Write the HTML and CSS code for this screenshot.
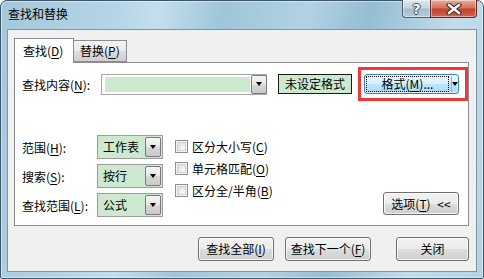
FILE: index.html
```html
<!DOCTYPE html>
<html lang="zh-CN">
<head>
    <meta charset="UTF-8">
    <title>查找和替换</title>
    <link rel="stylesheet" href="styles.css">
</head>
<body>
<div class="window">
    <div class="titlebar">
        <span class="title">查找和替换</span>
        <div class="caption-btns">
            <div class="cap help">?</div>
            <div class="cap close">
                <svg width="16" height="12" viewBox="0 0 16 12">
                    <path d="M3 2 L13 10 M13 2 L3 10" stroke="#3a2622" stroke-width="4.4" stroke-linecap="square"/>
                    <path d="M3 2 L13 10 M13 2 L3 10" stroke="#fff" stroke-width="2.4" stroke-linecap="square"/>
                </svg>
            </div>
        </div>
    </div>
    <div class="client">
        <div class="tabs">
            <div class="tab active">查找(<u>D</u>)</div>
            <div class="tab">替换(<u>P</u>)</div>
        </div>
        <div class="panel">
            <div class="find-row">
                <span class="find-label">查找内容(<u>N</u>):</span>
                <div class="combo find-combo">
                    <span class="field"></span>
                    <span class="drop"><i class="arrow"></i></span>
                </div>
                <div class="format-state">未设定格式</div>
                <div class="highlight">
                    <div class="btn format-btn">
                        <span class="focus-text">格式(<u>M</u>)...</span>
                        <span class="split"><i class="arrow"></i></span>
                    </div>
                </div>
            </div>
            <div class="options">
                <div class="opt-grid">
                    <span class="opt-label">范围(<u>H</u>):</span>
                    <div class="combo small"><span class="field">工作表</span><span class="drop"><i class="arrow"></i></span></div>
                    <span class="opt-label">搜索(<u>S</u>):</span>
                    <div class="combo small"><span class="field">按行</span><span class="drop"><i class="arrow"></i></span></div>
                    <span class="opt-label">查找范围(<u>L</u>):</span>
                    <div class="combo small"><span class="field">公式</span><span class="drop"><i class="arrow"></i></span></div>
                </div>
                <div class="checks">
                    <div class="check"><span class="box"></span><span>区分大小写(<u>C</u>)</span></div>
                    <div class="check"><span class="box"></span><span>单元格匹配(<u>O</u>)</span></div>
                    <div class="check"><span class="box"></span><span>区分全/半角(<u>B</u>)</span></div>
                </div>
                <div class="btn options-btn"><span>选项(<u>T</u>) &lt;&lt;</span></div>
            </div>
        </div>
        <div class="actions">
            <div class="btn find-all"><span>查找全部(<u>I</u>)</span></div>
            <div class="btn find-next"><span>查找下一个(<u>F</u>)</span></div>
            <div class="btn close-btn"><span>关闭</span></div>
        </div>
    </div>
</div>
</body>
</html>
```

FILE: styles.css
```css
body {
    margin: 0;
    font-family: "Noto Sans CJK SC", "Microsoft YaHei", sans-serif;
    font-size: 12px;
    color: #000;
    background: #fff;
}

u {
    text-decoration-thickness: 1px;
    text-underline-offset: 2px;
}

.window {
    width: 484px;
    height: 279px;
    box-sizing: border-box;
    border: 1px solid #3e5566;
    border-radius: 7px 7px 2px 2px;
    padding: 0 6px 6px 6px;
    display: flex;
    flex-direction: column;
    background: linear-gradient(100deg, #a3c7db 0%, #b6d5e6 22%, #c4dfec 30%, #9fc5d9 42%, #b2d2e4 58%, #95bdd3 70%, #c3dde9 86%, #b4d3e4 100%);
    box-shadow: inset 0 0 0 1px rgba(255, 255, 255, 0.45);
}

.titlebar {
    height: 28px;
    display: flex;
    justify-content: space-between;
    align-items: flex-start;
}

.title {
    padding: 4px 0 0 1px;
    line-height: 18px;
}

.caption-btns {
    display: flex;
    margin-top: -1px;
}

.cap {
    height: 17px;
    border: 1px solid #4b5e6b;
    border-top: none;
    box-shadow: inset 0 0 0 1px rgba(255, 255, 255, 0.45);
    display: flex;
    align-items: center;
    justify-content: center;
}

.help {
    width: 27px;
    border-right: none;
    border-radius: 0 0 0 4px;
    background: linear-gradient(#dce8f0, #c2d4e0 48%, #a6bccb 52%, #b8cdda);
    color: #fff;
    font-family: "DejaVu Sans", sans-serif;
    font-weight: bold;
    font-size: 14px;
    text-shadow: 1px 0 #3c4c58, -1px 0 #3c4c58, 0 1px #3c4c58, 0 -1px #3c4c58;
}

.close {
    width: 45px;
    border-color: #5b2b22;
    border-radius: 0 0 4px 0;
    background: linear-gradient(#e6ab9c, #d5735f 45%, #c2412a 55%, #d3654f);
}

.client {
    flex: 1;
    border: 1px solid #7e95a4;
    background: #f0f0f0;
    padding: 8px 7px 0 6px;
    display: flex;
    flex-direction: column;
}

.tabs {
    display: flex;
    align-items: flex-end;
    height: 24px;
}

.tab {
    box-sizing: border-box;
    border: 1px solid #898c95;
    line-height: 20px;
}

.tab.active {
    width: 60px;
    height: 25px;
    margin-bottom: -1px;
    border-bottom: none;
    background: #fff;
    padding: 2px 0 0 8px;
    position: relative;
    z-index: 1;
}

.tab:not(.active) {
    width: 53px;
    height: 22px;
    border-left: none;
    padding-left: 6px;
    background: linear-gradient(#f3f3f3, #ebebeb 50%, #dcdcdc 51%, #cfcfcf);
}

.panel {
    height: 164px;
    box-sizing: border-box;
    border: 1px solid #898c95;
    background: #fff;
    display: flex;
    flex-direction: column;
}

.find-row {
    display: flex;
    align-items: center;
    height: 34px;
    margin-top: 4px;
    padding-left: 7px;
}

.find-label {
    width: 79px;
}

.combo {
    box-sizing: border-box;
    display: flex;
    border: 1px solid #a7a7a7;
}

.find-combo {
    width: 166px;
    height: 21px;
    margin-right: 11px;
    padding: 2px 0 2px 3px;
    background: #fff;
}

.field {
    flex: 1;
    background: #cce8cf;
}

.drop {
    width: 14px;
    border: 1px solid #7a7a7a;
    border-radius: 2px;
    background: linear-gradient(#f6f6f6, #e6e6e6 50%, #d6d6d6 51%, #cbcbcb);
    display: flex;
    align-items: center;
    justify-content: center;
}

.find-combo .drop {
    margin: -2px -1px -2px 1px;
}

.arrow {
    width: 0;
    height: 0;
    border-left: 3.5px solid transparent;
    border-right: 3.5px solid transparent;
    border-top: 4px solid #000;
}

.format-state {
    box-sizing: border-box;
    width: 74px;
    height: 20px;
    margin-right: 6px;
    border: 1px solid #1a1a1a;
    background: #cce8cf;
    text-align: center;
    line-height: 17px;
}

.highlight {
    box-sizing: border-box;
    width: 110px;
    height: 34px;
    border: 3px solid #ef3838;
    padding: 4px 6px 4px 3px;
}

.btn {
    box-sizing: border-box;
    border: 1px solid #707070;
    border-radius: 3px;
    background: linear-gradient(#f2f2f2, #ebebeb 50%, #dddddd 51%, #cfcfcf);
    box-shadow: inset 0 0 0 1px rgba(255, 255, 255, 0.7);
    display: flex;
    align-items: center;
    justify-content: center;
    line-height: 16px;
}

.format-btn {
    height: 20px;
    border-color: #3c7fb1;
    background: linear-gradient(#eaf6fd, #d9f0fc 50%, #bee6fd 51%, #a7d9f5);
    justify-content: flex-start;
    padding: 1px 0 1px 1px;
}

.focus-text {
    box-sizing: border-box;
    width: 84px;
    height: 16px;
    outline: 1px dotted #000;
    outline-offset: -1px;
    text-align: center;
    line-height: 15px;
}

.split {
    flex: 1;
    height: 100%;
    margin-left: 2px;
    border-left: 1px solid #8db2cc;
    display: flex;
    align-items: center;
    justify-content: center;
}

.options {
    display: flex;
    align-items: flex-start;
    margin-top: 34px;
}

.opt-grid {
    display: grid;
    grid-template-columns: 75px 66px;
    grid-auto-rows: 24px;
    row-gap: 5px;
    align-items: center;
    padding-left: 7px;
}

.combo.small {
    height: 24px;
    border-color: #9c9c9c;
    background: #cce8cf;
}

.combo.small .field {
    padding-left: 5px;
    line-height: 22px;
}

.combo.small .drop {
    width: 14px;
    margin: 1px;
}

.checks {
    display: flex;
    flex-direction: column;
    gap: 5px;
    margin-left: 12px;
    padding-top: 3px;
}

.check {
    display: flex;
    align-items: center;
    gap: 4px;
    height: 17px;
}

.box {
    box-sizing: border-box;
    width: 13px;
    height: 13px;
    border: 1px solid #8e8f8f;
    background: #fff;
    box-shadow: inset 0 0 0 1px #f4f4f4, inset 0 0 0 2px #d2d2d2, inset 2px 2px 4px 2px #dcdcdc;
}

.options-btn {
    width: 76px;
    height: 23px;
    margin: 57px 9px 0 auto;
    word-spacing: 4px;
}

.actions {
    display: flex;
    justify-content: flex-end;
    margin-top: 11px;
}

.actions .btn {
    height: 24px;
}

.find-all {
    width: 76px;
    margin-right: 11px;
}

.find-next {
    width: 86px;
    margin-right: 25px;
}

.close-btn {
    width: 73px;
}
```
